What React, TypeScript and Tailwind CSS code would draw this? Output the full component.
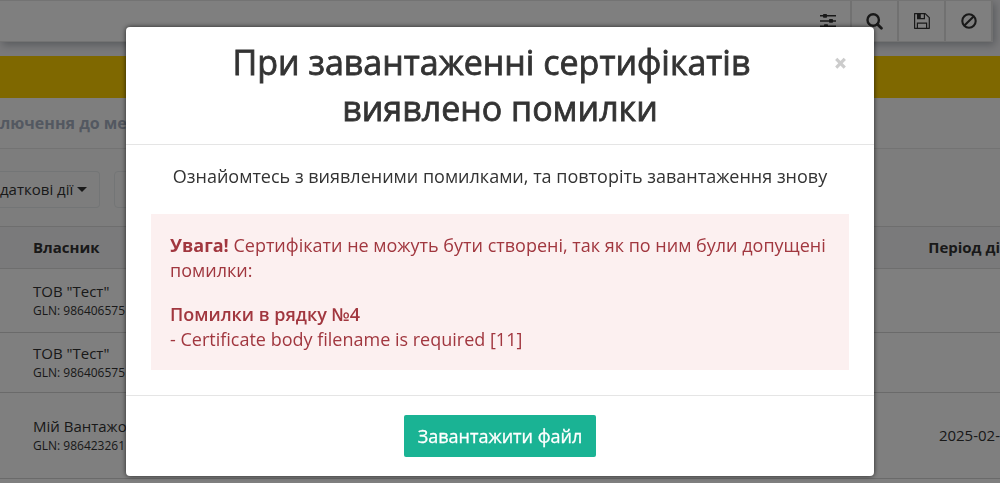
import React from "react";

const rows = [
  { owner: 'ТОВ "Тест"', gln: "GLN: 986406575", period: "", height: "h-16" },
  { owner: 'ТОВ "Тест"', gln: "GLN: 986406575", period: "", height: "h-[60px]" },
  { owner: "Мій Вантажо", gln: "GLN: 986423261", period: "2025-02-", height: "h-[86px]" },
];

function SlidersIcon() {
  return (
    <svg width="16" height="14" viewBox="0 0 16 14" fill="currentColor" aria-hidden="true">
      <path d="M0 1h16v1.5H0zM0 6.2h16v1.5H0zM0 11.5h16V13H0z" />
      <rect x="3" y="0" width="4" height="3.8" rx="0.7" />
      <rect x="9" y="5" width="4" height="3.8" rx="0.7" />
      <rect x="4" y="10.2" width="4" height="3.8" rx="0.7" />
    </svg>
  );
}

function SearchIcon() {
  return (
    <svg width="17" height="17" viewBox="0 0 17 17" fill="none" stroke="currentColor" aria-hidden="true">
      <circle cx="7.2" cy="7" r="5.7" strokeWidth="2.4" />
      <path d="M11.4 11.2l4 4" strokeWidth="2.8" strokeLinecap="round" />
    </svg>
  );
}

function SaveIcon() {
  return (
    <svg width="16" height="16" viewBox="0 0 16 16" fill="none" stroke="currentColor" strokeWidth="1.2" aria-hidden="true">
      <path d="M.6.6h10.6l4.1 4.1v10.6H.6z" strokeLinejoin="round" />
      <path d="M3.6.8v4.8h6.8V.8M3.4 15.2v-5h9.2v5" />
      <path d="M3.6.8h3.2v4.8H3.6z" fill="currentColor" stroke="none" />
    </svg>
  );
}

function BanIcon() {
  return (
    <svg width="16" height="16" viewBox="0 0 16 16" fill="none" stroke="currentColor" strokeWidth="2.1" aria-hidden="true">
      <circle cx="8" cy="8" r="6.7" />
      <path d="M3.4 12.6l9.2-9.2" />
    </svg>
  );
}

const tools = [
  { label: "Налаштування", icon: <SlidersIcon /> },
  { label: "Пошук", icon: <SearchIcon /> },
  { label: "Зберегти", icon: <SaveIcon /> },
  { label: "Скасувати", icon: <BanIcon /> },
];

function Page() {
  return (
    <div className="min-h-screen overflow-hidden bg-white text-[15px] text-[#333333]">
      <div className="bg-[#f3f3f6] pr-[7px] pb-3.5">
        <header className="flex h-[42px] justify-end border-y border-[#e7e7e7] bg-white shadow-[2px_3px_8px_rgba(80,90,100,0.4)]">
          {tools.map((tool) => (
            <button
              key={tool.label}
              aria-label={tool.label}
              className="flex w-[47px] items-center justify-center border-r-2 border-[#e2e2e2]"
            >
              {tool.icon}
            </button>
          ))}
        </header>
      </div>
      <div className="h-[42px] bg-[#ffd000]" />
      <nav className="flex h-[51px] items-center border-b border-[#e7e7e7] bg-[#fdfdfd]">
        <a href="#connect" className="text-[16px] font-bold whitespace-nowrap text-[#a7b1c2]">
          лючення до мережі
        </a>
      </nav>
      <div className="flex gap-3.5 bg-[#fbfbfb] pt-[22px] pb-[18px]">
        <button className="flex h-[37px] items-center gap-1 rounded-r-sm border border-l-0 border-[#e7eaec] pr-3 whitespace-nowrap">
          даткові дії
          <span className="border-x-[5px] border-t-[5px] border-x-transparent border-t-[#333333]" />
        </button>
        <button aria-label="Дії" className="h-[37px] w-32 rounded-sm border border-[#e7eaec]" />
      </div>
      <table className="w-full border-collapse">
        <thead>
          <tr className="h-[42px] border-y border-[#dddddd] bg-[#f5f5f6]">
            <th className="pl-[33px] text-left font-bold">Власник</th>
            <th className="text-right font-bold whitespace-nowrap">Період ді</th>
          </tr>
        </thead>
        <tbody>
          {rows.map((row, i) => (
            <tr key={i} className={`${row.height} border-b border-[#d4d4d4]`}>
              <td className="pl-[33px] leading-5">
                <div>{row.owner}</div>
                <div className="text-[12px]">{row.gln}</div>
              </td>
              <td className="text-right whitespace-nowrap">{row.period}</td>
            </tr>
          ))}
        </tbody>
      </table>
    </div>
  );
}

function ErrorDialog() {
  return (
    <div className="fixed inset-0 overflow-hidden bg-black/50 px-4 pt-[27px]">
      <section
        role="dialog"
        aria-modal="true"
        aria-labelledby="dialog-title"
        className="mx-auto w-full max-w-[748px] rounded-sm bg-white text-[#333333] shadow-[0_0_5px_rgba(0,0,0,0.7)]"
      >
        <header className="border-b border-[#e5e5e5] px-[25px] pt-3 pb-[13px]">
          <button
            aria-label="Закрити"
            className="float-right mt-3 w-[17px] text-center text-[24px] leading-6 font-extrabold text-[#cccccc]"
          >
            ×
          </button>
          <h1
            id="dialog-title"
            className="text-center text-[34px] leading-[46px] font-medium [-webkit-text-stroke:0.8px_#333333]"
          >
            При завантаженні сертифікатів
            <br />
            виявлено помилки
          </h1>
        </header>
        <div className="px-[25px] pt-[19px] pb-[25px] text-[18px] leading-[25px]">
          <p className="text-center">Ознайомтесь з виявленими помилками, та повторіть завантаження знову</p>
          <div role="alert" className="mt-[25px] bg-[#fcf0f0] px-[19px] pt-[19px] pb-[18px] text-[#a1373f]">
            <p>
              <strong className="font-bold">Увага!</strong> Сертифікати не можуть бути створені, так як по ним були
              допущені помилки:
            </p>
            <p className="mt-[19px] font-semibold">Помилки в рядку №4</p>
            <p>- Certificate body filename is required [11]</p>
          </div>
        </div>
        <footer className="flex justify-center border-t border-[#e5e5e5] py-[19px]">
          <button className="h-[42px] rounded-xs bg-[#1ab394] px-3.5 text-[18px] font-medium text-white [-webkit-text-stroke:0.3px_#ffffff]">
            Завантажити файл
          </button>
        </footer>
      </section>
    </div>
  );
}

export default function App() {
  return (
    <main className="font-['Open_Sans','Noto_Sans',sans-serif]">
      <Page />
      <ErrorDialog />
    </main>
  );
}
